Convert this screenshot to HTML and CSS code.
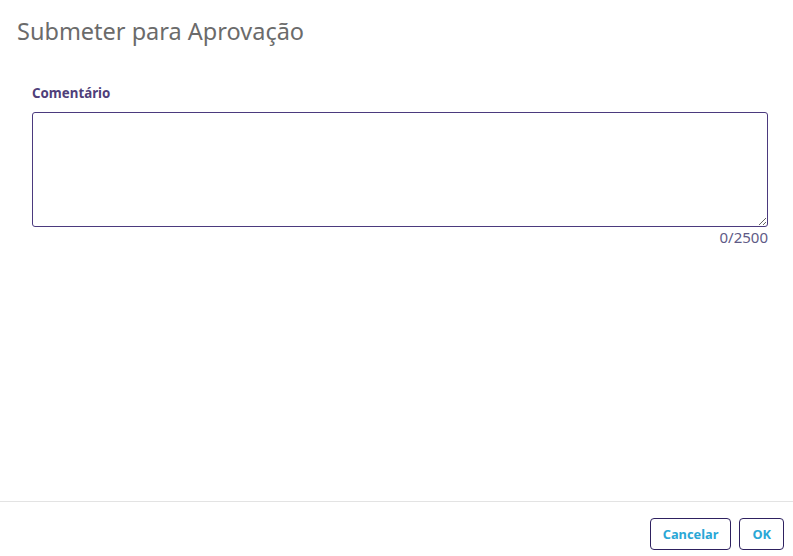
FILE: index.html
```html
<!DOCTYPE html>
<html lang="pt">
<head>
<meta charset="utf-8">
<title>Submeter para Aprovação</title>
<link rel="stylesheet" href="styles.css">
</head>
<body>
<div class="dialog">
  <header class="dialog-header">
    <h1 class="dialog-title">Submeter para Aprovação</h1>
  </header>
  <main class="dialog-body">
    <label class="field-label" for="comment">Comentário</label>
    <textarea id="comment" class="field-textarea" maxlength="2500"></textarea>
    <div class="field-counter">0/2500</div>
  </main>
  <footer class="dialog-footer">
    <button class="btn">Cancelar</button>
    <button class="btn">OK</button>
  </footer>
</div>
</body>
</html>
```
FILE: styles.css
```css
* { box-sizing: border-box; }
html, body { margin: 0; padding: 0; background: #fff; }
body {
  font-family: "Noto Sans", "Open Sans", "DejaVu Sans", sans-serif;
  width: 793px;
  height: 556px;
  overflow: hidden;
}
.dialog {
  display: flex;
  flex-direction: column;
  height: 556px;
}
.dialog-header {
  padding: 14px 17px 0;
}
.dialog-title {
  margin: 0;
  font-size: 23.5px;
  font-weight: 400;
  line-height: 34px;
  color: #6b6b6b;
}
.dialog-body {
  flex: 1;
  padding: 36px 25px 0 32px;
  display: flex;
  flex-direction: column;
}
.field-label {
  font-size: 13.3px;
  font-weight: 700;
  color: #4f3f7a;
  line-height: 18px;
  margin-bottom: 10px;
}
.field-textarea {
  height: 115px;
  width: 100%;
  border: 1px solid #4b3a7e;
  border-radius: 3px;
  resize: vertical;
  font-family: inherit;
  font-size: 13px;
  padding: 6px 8px;
  outline: none;
  display: block;
}
.field-counter {
  text-align: right;
  font-size: 15px;
  color: #5e5a86;
  line-height: 20px;
  margin-top: 0;
}
.dialog-footer {
  border-top: 1px solid #e3e3e3;
  display: flex;
  justify-content: flex-end;
  gap: 8px;
  padding: 16px 9px 6px;
  height: 55px;
}
.btn {
  height: 32px;
  padding: 0 12px;
  background: #fff;
  border: 1px solid #2e2160;
  border-radius: 4px;
  color: #2aa7d6;
  font-family: inherit;
  font-size: 12.8px;
  font-weight: 700;
  cursor: pointer;
}
```
